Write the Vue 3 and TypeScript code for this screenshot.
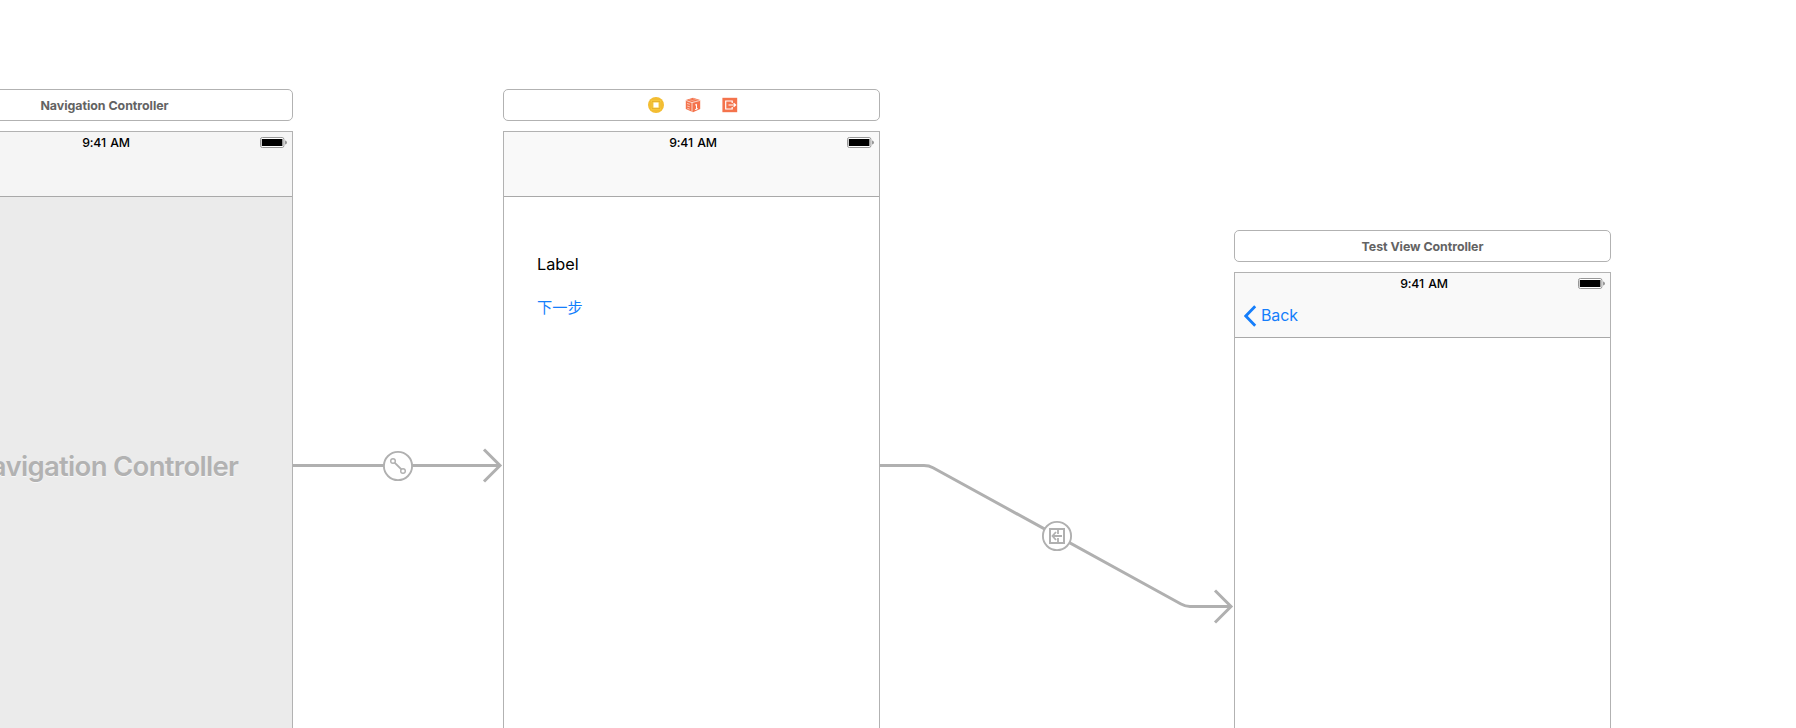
<script setup lang="ts">
interface Scene {
  id: string
  title: string
  x: number
  y: number
  time: string
}

const scenes: Scene[] = [
  { id: 'navigation', title: 'Navigation Controller', x: -84, y: 89, time: '9:41 AM' },
  { id: 'root', title: '', x: 503, y: 89, time: '9:41 AM' },
  { id: 'test', title: 'Test View Controller', x: 1234, y: 230, time: '9:41 AM' },
]
</script>

<template>
  <main class="canvas">
    <section
      v-for="scene in scenes"
      :key="scene.id"
      class="scene"
      :class="scene.id"
      :style="{ left: scene.x + 'px', top: scene.y + 'px' }"
    >
      <header class="dock">
        <span v-if="scene.title" class="dock-title" :class="scene.id + '-title'">{{ scene.title }}</span>
        <div v-else class="dock-icons">
          <svg width="16" height="16" viewBox="0 0 16 16">
            <circle cx="8" cy="8" r="8" fill="#f3bd32" />
            <path d="M3 3.500h10v9H3Z" fill="#f8d145" />
            <path d="M4 4.500h8v7H4Z" fill="none" stroke="#e3aa2a" stroke-width="0.800" />
            <rect x="5.500" y="5.500" width="5" height="5" fill="#fff" />
          </svg>
          <svg width="16" height="16" viewBox="0 0 16 16">
            <path d="M8 .8 15.200 3.100v8.800L8 15.200.8 11.900V3.100Z" fill="#f4734c" />
            <path d="M.8 3.400 7 5.600 15.200 3.400M7 5.600v9.200" fill="none" stroke="#fff" stroke-width="0.700" />
            <path d="m4.200 2.600 6.400 1.900M8 1.600l4.800 1.600" fill="none" stroke="#fac0ab" stroke-width="0.600" />
            <path d="m2 6.500 2.800.8M2.200 9l2.600.8M2.300 11.300l2.400.9" fill="none" stroke="#fde0d6" stroke-width="0.800" />
            <path d="m10 8.200 1.500-.9v5M9.900 12.600l3-1" fill="none" stroke="#fff" stroke-width="1" />
          </svg>
          <svg width="16" height="16" viewBox="0 0 16 16">
            <rect x=".4" y=".8" width="14.800" height="14.400" fill="#f4734c" />
            <path d="M10.200 5.900V4H3.700v8h6.500v-1.900" fill="none" stroke="#fff" stroke-width="1.200" />
            <path d="M6.500 8h7M11.600 6.100 13.700 8l-2.100 1.900" fill="none" stroke="#fff" stroke-width="1.100" />
          </svg>
        </div>
      </header>

      <div class="device">
        <div class="bar">
          <div class="status">
            <span class="time">{{ scene.time }}</span>
            <svg class="battery" width="28" height="11" viewBox="0 0 28 11">
              <rect x=".5" y=".5" width="23.400" height="10" rx="1.800" fill="#fff" stroke="#979797" />
              <rect x="1.800" y="2" width="20.600" height="7" />
              <path d="M25.100 3.400c1.200.4 1.800 1.200 1.800 2.100s-.6 1.700-1.800 2.100Z" fill="#8a8a8a" />
            </svg>
          </div>
          <div v-if="scene.id === 'test'" class="back">
            <svg width="13" height="22" viewBox="0 0 13 22">
              <path d="M11.200 1.200 1.800 11l9.400 9.800" fill="none" stroke="#157efb" stroke-width="2.800" />
            </svg>
            <span class="back-text">Back</span>
          </div>
        </div>
        <div class="body">
          <span v-if="scene.id === 'navigation'" class="placeholder">Navigation Controller</span>
          <template v-if="scene.id === 'root'">
            <span class="label">Label</span>
            <span class="next">下一步</span>
          </template>
        </div>
      </div>
    </section>

    <svg class="segues" width="1796" height="728" viewBox="0 0 1796 728">
      <g fill="none" stroke="#b0b0b0" stroke-width="3">
        <path d="M293 465.500H500M484 449.500l16 16-16 16" />
        <path d="M880 465.500h44q5 0 9 2.200L1181 604q4.500 2.500 9 2.500h41M1215 590.500l16 16-16 16" />
      </g>
      <g transform="translate(398 466)" fill="#fff" stroke="#b0b0b0">
        <circle r="14.100" stroke-width="1.900" />
        <path d="m-3.400-3.400 6.800 6.800" stroke-width="1.900" />
        <circle cx="-5" cy="-5" r="2.300" stroke-width="1.400" />
        <circle cx="5" cy="5" r="2.300" stroke-width="1.400" />
      </g>
      <g transform="translate(1057 536)" fill="#fff" stroke="#b0b0b0">
        <circle r="14.100" stroke-width="1.900" />
        <path d="M-7-7H7V7H-7Z" stroke-width="2" />
        <path d="M1-7v5M1 2v5M5 0h-9M-1-4-4.500 0-1 4" fill="none" stroke-width="1.800" />
      </g>
    </svg>
  </main>
</template>

<style>
body {
  margin: 0;
  background: #fff;
}
</style>

<style scoped>
.canvas {
  position: relative;
  width: 1796px;
  height: 728px;
  overflow: hidden;
  background: #fff;
  font-family: Inter, "Noto Sans CJK SC", sans-serif;
}
.scene {
  position: absolute;
  display: flex;
  flex-direction: column;
  gap: 10px;
  width: 377px;
}
.dock {
  box-sizing: border-box;
  height: 32px;
  display: flex;
  align-items: center;
  justify-content: center;
  border: 1px solid #b2b2b2;
  border-radius: 5px;
  background: #fff;
}
.dock-title {
  padding-top: 2px;
  color: #636363;
  font-size: 12.400px;
  font-weight: 700;
  line-height: 16px;
  white-space: nowrap;
}
.navigation-title {
  letter-spacing: -0.030px;
}
.test-title {
  letter-spacing: -0.050px;
}
.dock-icons {
  display: flex;
  gap: 21px;
  padding-left: 2px;
}
.device {
  box-sizing: border-box;
  height: 660px;
  display: flex;
  flex-direction: column;
  border: 1px solid #b2b2b2;
}
.bar {
  flex: none;
  height: 64px;
  border-bottom: 1px solid #a9a9a9;
  background: #f9f9f9;
}
.navigation .bar {
  background: #f5f5f5;
}
.status {
  display: grid;
  grid-template-columns: 1fr auto 1fr;
  align-items: center;
  height: 21px;
  padding: 0 4px 0 7px;
}
.time {
  grid-column: 2;
  font-size: 12.300px;
  font-weight: 500;
  line-height: 16px;
  letter-spacing: -0.120px;
  word-spacing: 1px;
  color: #000;
}
.battery {
  justify-self: end;
}
.back {
  display: flex;
  align-items: center;
  gap: 4px;
  height: 44px;
  padding-left: 9px;
  color: #157efb;
  font-size: 16px;
  letter-spacing: -0.150px;
}
.back-text {
  padding-bottom: 2px;
}
.body {
  flex: 1;
  display: flex;
  flex-direction: column;
  align-items: flex-start;
  background: #fff;
}
.navigation .body {
  align-items: center;
  background: #ebebeb;
}
.placeholder {
  margin-top: 252px;
  color: #b2b2b2;
  font-size: 27.500px;
  font-weight: 600;
  line-height: 34px;
  letter-spacing: -0.690px;
  text-shadow: 0 1px #f7f7f7;
  white-space: nowrap;
}
.root .body {
  padding: 56px 0 0 33px;
  font-size: 16.300px;
}
.label {
  line-height: 22px;
  letter-spacing: 0;
}
.next {
  margin-top: 20px;
  color: #157efb;
  font-family: "Noto Sans CJK SC", sans-serif;
  font-size: 15.200px;
  font-weight: 400;
  line-height: 22px;
}
.segues {
  position: absolute;
  inset: 0;
}
</style>
